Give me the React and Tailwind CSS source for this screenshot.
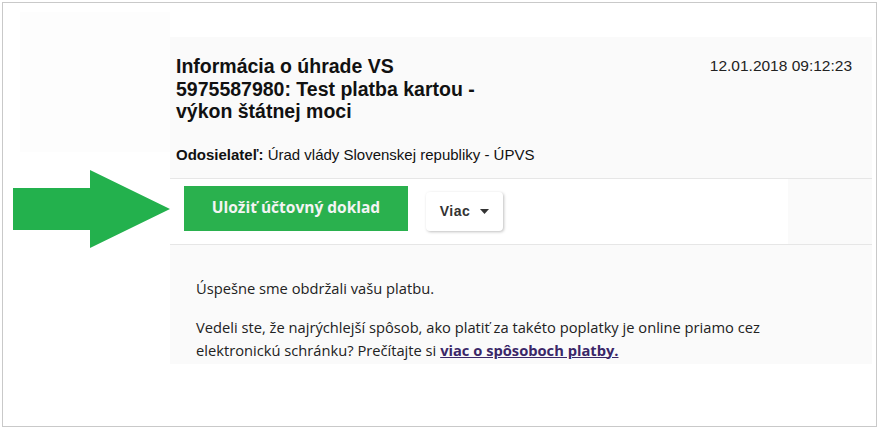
export default function App() {
  return (
    <div className="w-[879px] h-[431px] bg-white p-[2px] box-border">
      <div className="h-[425px] w-[875px] border border-[#c9c9c9] flex box-border">
        <div className="w-[167px] shrink-0 flex flex-col">
          <div className="h-[9px]" />
          <div className="ml-[17px] h-[140px] bg-[#fdfdfd]" />
          <svg className="ml-[10px] mt-[18px]" width="158" height="80" viewBox="0 0 158 80">
            <polygon points="0,18 77,18 77,0 157,39 77,78 77,60 0,60" fill="#23b14d" />
          </svg>
        </div>
        <div className="w-[702px] shrink-0 mt-[34px] h-[327px] bg-[#fafafa] flex flex-col" style={{ fontFamily: '"Liberation Sans", Arial, sans-serif' }}>
          <div className="flex justify-between pl-[6px] pr-[20px] pt-[18px]">
            <h1 className="w-[320px] text-[19.5px] leading-[22.5px] font-bold text-[#111]">
              Informácia o úhrade VS 5975587980: Test platba kartou - výkon štátnej moci
            </h1>
            <div className="text-[15.5px] leading-[22px] text-[#222]">12.01.2018 09:12:23</div>
          </div>
          <div className="pl-[6px] mt-[22px] text-[15px] leading-[20px] text-[#111]">
            <span className="font-bold">Odosielateľ:</span> Úrad vlády Slovenskej republiky - ÚPVS
          </div>
          <div className="mt-[13px] border-t border-[#e6e6e6] border-b h-[67px] flex">
            <div className="w-[618px] bg-white flex items-start pl-[14px] pt-[7px] gap-[18px]">
              <button
                className="w-[224px] h-[45px] bg-[#2ab14e] text-[#f4f4f4] text-[15.5px] font-bold"
                style={{ fontFamily: '"Open Sans", "Noto Sans", sans-serif' }}
              >
                Uložiť účtovný doklad
              </button>
              <button className="mt-[6px] w-[77px] h-[39px] bg-white rounded-[4px] shadow-[1px_1px_3px_rgba(0,0,0,0.25)] flex items-center justify-center gap-[10px] text-[14px] font-bold text-[#333] tracking-[0.5px]">
                Viac
                <svg width="9" height="5" viewBox="0 0 9 5"><polygon points="0,0 9,0 4.5,5" fill="#333" /></svg>
              </button>
            </div>
          </div>
          <div
            className="pl-[26px] pt-[32px] text-[14.7px] leading-[23px] text-[#222]"
            style={{ fontFamily: '"Open Sans", "Noto Sans", sans-serif' }}
          >
            <p>Úspešne sme obdržali vašu platbu.</p>
            <p className="mt-[16px] w-[620px]">
              Vedeli ste, že najrýchlejší spôsob, ako platiť za takéto poplatky je online priamo cez elektronickú schránku? Prečítajte si{' '}
              <a className="font-bold text-[#3a2768] underline">viac o spôsoboch platby.</a>
            </p>
          </div>
        </div>
      </div>
    </div>
  );
}
